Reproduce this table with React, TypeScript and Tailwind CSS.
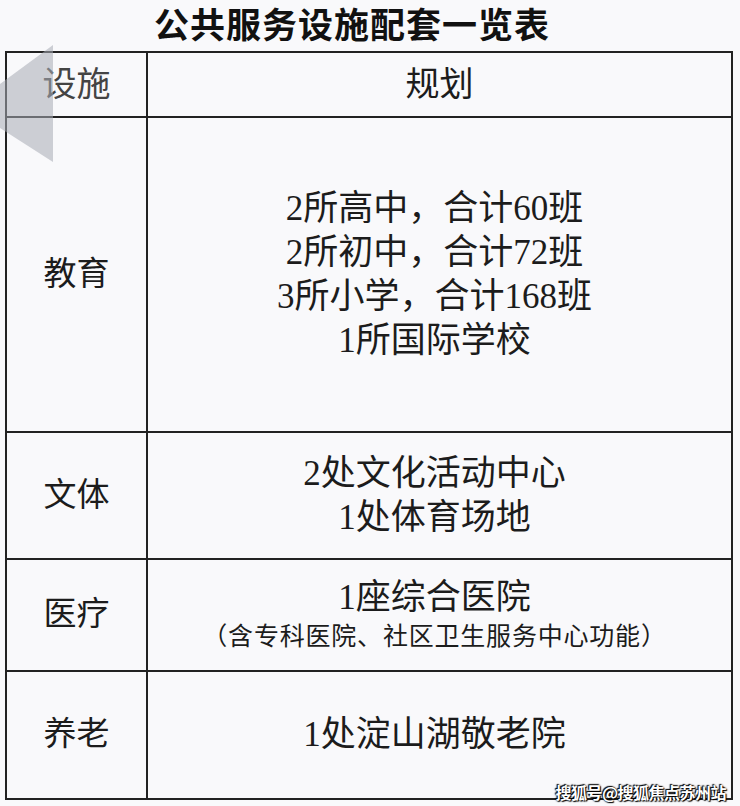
const rows = [
  {
    name: '教育',
    h: 'h-[315px]',
    lines: ['2所高中，合计60班', '2所初中，合计72班', '3所小学，合计168班', '1所国际学校'],
  },
  { name: '文体', h: 'h-[127px]', lines: ['2处文化活动中心', '1处体育场地'] },
  { name: '医疗', h: 'h-[112px]', lines: ['1座综合医院'], note: '（含专科医院、社区卫生服务中心功能）' },
  { name: '养老', h: 'h-[126px]', lines: ['1处淀山湖敬老院'] },
];

const font = { fontFamily: '"Liberation Serif", "Noto Sans CJK SC", serif' };

export default function App() {
  return (
    <div className="relative w-[740px] h-[806px] bg-[#f9f9fb] text-[#1c1c1c] overflow-hidden" style={font}>
      <h1
        className="h-[51px] flex items-start justify-center pr-[36px] pt-[2px] text-[35px] font-bold leading-[42px] tracking-[1px] text-[#111]"
        style={{ fontFamily: '"Noto Sans CJK SC", sans-serif' }}
      >
        公共服务设施配套一览表
      </h1>

      <div className="ml-[5px] w-[728px] border-2 border-[#222]">
        <div className="flex h-[65px] border-b-2 border-[#222]">
          <div className="w-[141px] border-r-2 border-[#222] flex items-center justify-center text-[34px] text-[#444]">
            设施
          </div>
          <div className="flex-1 flex items-center justify-center text-[34px]">规划</div>
        </div>

        {rows.map((r, i) => (
          <div key={r.name} className={`flex ${r.h} ${i < rows.length - 1 ? 'border-b-2 border-[#222]' : ''}`}>
            <div className="w-[141px] border-r-2 border-[#222] flex items-center justify-center text-[33px]">
              {r.name}
            </div>
            <div className="flex-1 flex flex-col items-center justify-center text-[35px] leading-[44px] pr-[10px]">
              {r.lines.map((l) => (
                <div key={l}>{l}</div>
              ))}
              {r.note && <div className="text-[25px] leading-[34px] tracking-[0.8px]">{r.note}</div>}
            </div>
          </div>
        ))}
      </div>

      <svg className="absolute left-0 top-[44px] pointer-events-none" width="54" height="120" viewBox="0 0 54 120">
        <polygon points="53,1 0,40 0,84 53,118" fill="#a8acb4" opacity="0.55" />
      </svg>

      <div
        className="absolute right-[14px] bottom-[6px] text-[16px] font-bold text-white leading-none tracking-[-0.5px]"
        style={{
          fontFamily: '"Noto Sans CJK SC", sans-serif',
          textShadow: '0 0 2px #000, 1px 1px 1px #000, -1px -1px 1px #000',
        }}
      >
        搜狐号@搜狐焦点苏州站
      </div>
    </div>
  );
}
